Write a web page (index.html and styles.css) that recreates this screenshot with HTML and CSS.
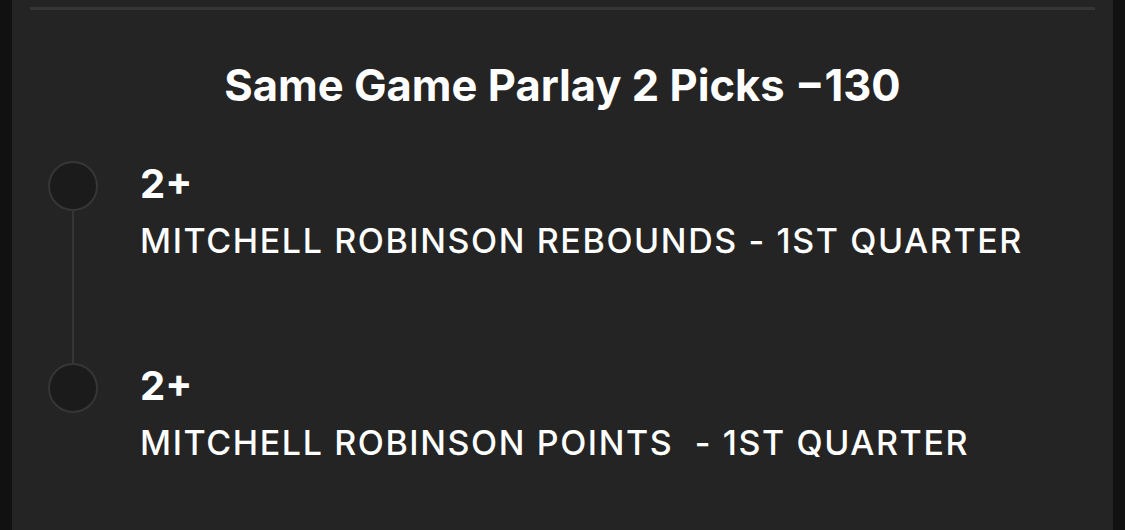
FILE: index.html
```html
<!DOCTYPE html>
<html lang="en">
<head>
  <meta charset="UTF-8" />
  <meta name="viewport" content="width=device-width, initial-scale=1.0" />
  <title>Same Game Parlay</title>
  <link rel="stylesheet" href="styles.css">
</head>
<body>
  <main class="panel">
    <div class="divider"></div>

    <h1 class="title">Same Game Parlay 2 Picks &minus;130</h1>

    <!-- Parlay legs, joined by a thin line -->
    <ul class="legs">
      <li class="leg">
        <div class="marker">
          <span class="dot"></span>
          <span class="link"></span>
        </div>
        <div class="leg-text">
          <div class="line-value">2+</div>
          <div class="market">MITCHELL ROBINSON REBOUNDS - 1ST QUARTER</div>
        </div>
      </li>
      <li class="leg">
        <div class="marker">
          <span class="dot"></span>
        </div>
        <div class="leg-text">
          <div class="line-value">2+</div>
          <div class="market">MITCHELL ROBINSON POINTS &nbsp;- 1ST QUARTER</div>
        </div>
      </li>
    </ul>
  </main>
</body>
</html>
```

FILE: styles.css
```css
:root {
  --page-bg: #111111;
  --panel-bg: #242424;
  --divider: #353535;
  --dot-fill: #1b1b1b;
  --dot-ring: #363636;
  --text: #ffffff;
  --font: 'Inter', 'Liberation Sans', sans-serif;
}

* {
  box-sizing: border-box;
  margin: 0;
  padding: 0;
}

html, body {
  height: 100%;
}

body {
  background: var(--page-bg);
  color: var(--text);
  font-family: var(--font);
  padding: 0 12px;
  overflow: hidden;
}

.panel {
  background: var(--panel-bg);
  height: 100%;
  padding: 7px 18px 0 18px;
  overflow: hidden;
}

.divider {
  height: 3px;
  background: var(--divider);
}

.title {
  font-size: 43.5px;
  font-weight: 700;
  text-align: center;
  margin-top: 49px;
  line-height: 52px;
}

.legs {
  list-style: none;
  margin-top: 50px;
}

.leg {
  display: flex;
  gap: 42px;
  padding-left: 18px;
}

.leg:first-child {
  height: 202px;
}

.marker {
  width: 50px;
  display: flex;
  flex-direction: column;
  align-items: center;
  flex-shrink: 0;
}

.dot {
  width: 50px;
  height: 50px;
  border-radius: 50%;
  background: var(--dot-fill);
  border: 2px solid var(--dot-ring);
  flex-shrink: 0;
}

.link {
  width: 2px;
  flex: 1;
  background: var(--dot-ring);
}

.leg-text {
  padding-top: 0;
}

.line-value {
  font-size: 40px;
  font-weight: 700;
  line-height: 46px;
}

.market {
  font-size: 34px;
  font-weight: 500;
  letter-spacing: 1.6px;
  margin-top: 14px;
  line-height: 40px;
}
```
